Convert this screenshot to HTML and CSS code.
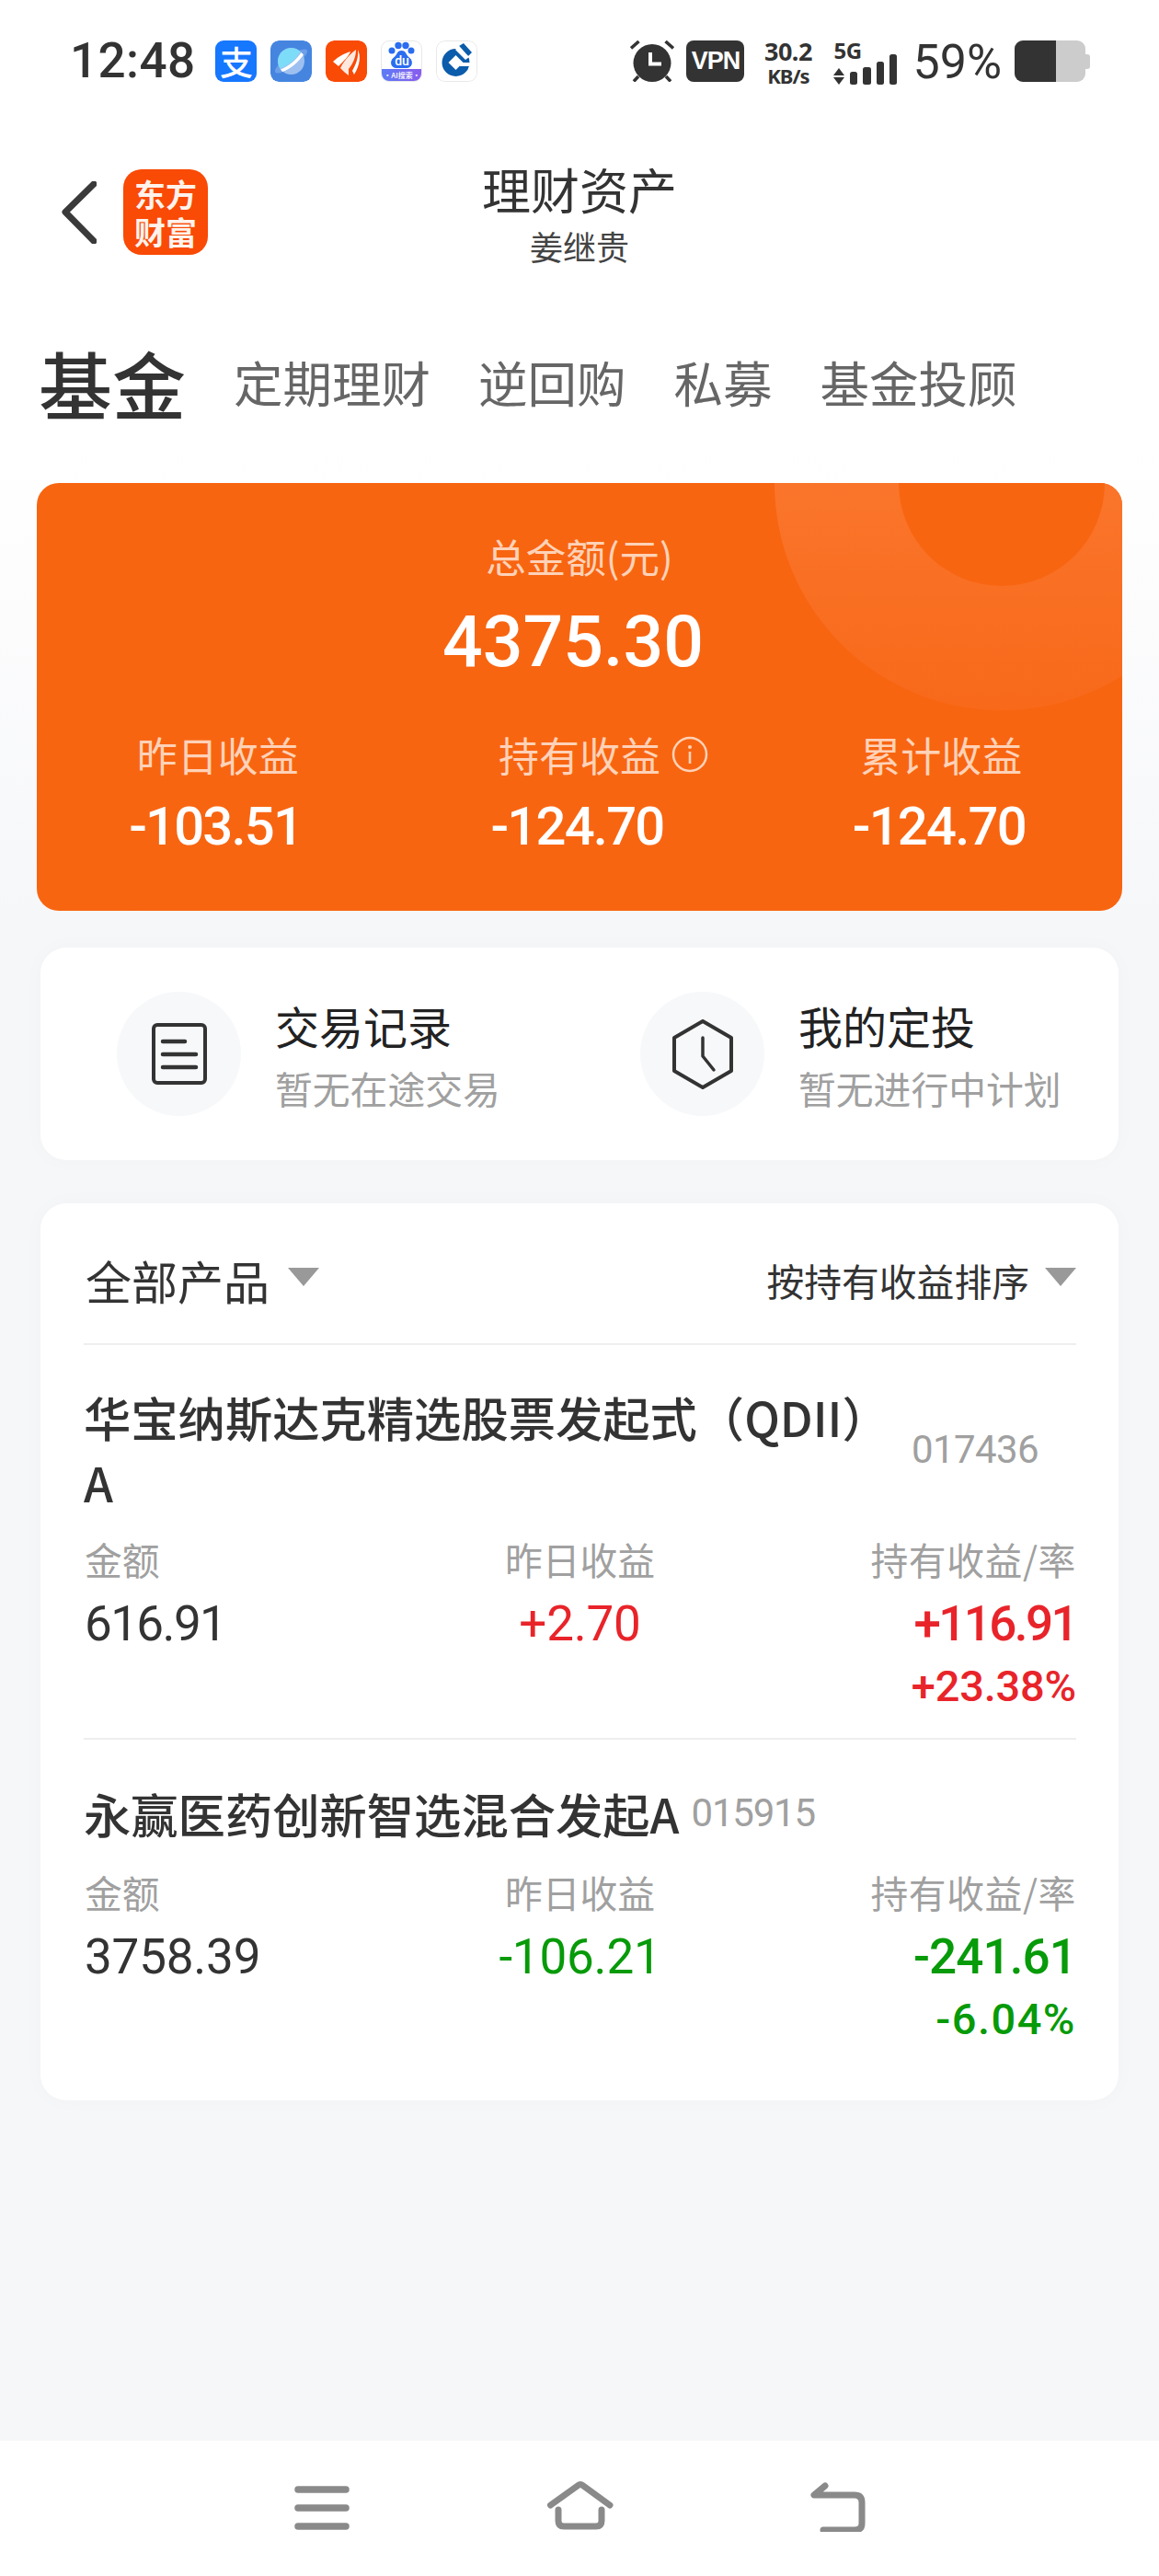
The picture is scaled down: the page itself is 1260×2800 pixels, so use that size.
FILE: index.html
```html
<!DOCTYPE html>
<html lang="zh-CN">
<head>
<meta charset="utf-8">
<title>理财资产</title>
<link rel="stylesheet" href="styles.css">
</head>
<body>
<div class="page">
  <div class="statusbar">
    <div class="status-left">
      <span class="time">12:48</span>
      <div class="app-icons">
        <span class="app app-alipay">支</span>
        <svg class="app" viewBox="0 0 45 45"><rect width="45" height="45" rx="9" fill="#4585E0"/><ellipse cx="22.500" cy="22.500" rx="21" ry="6" transform="rotate(-35 22.500 22.500)" fill="#6C9FE8"/><circle cx="22.500" cy="22.500" r="14.500" fill="#9DC0F0"/><path d="M10.500 30.500A14.500 14.500 0 0 1 32.500 12A40 40 0 0 1 10.500 30.500Z" fill="#7DDCF8"/><path d="M11 31.500C20 28 28 21 33.500 13L36 15.500C30 24 22 31 13 34Z" fill="#fff"/></svg>
        <svg class="app" viewBox="0 0 45 45"><rect width="45" height="45" rx="9" fill="#F94A06"/><path d="M8 23C14 17 21 14 27 12C25 17 20 22 14 28Z" fill="#fff"/><path d="M16 30C20 22 27 14 33 10C33 19 29 26 25 31L25 38C22 36 19 33 16 30Z" fill="#FFE9DF"/><path d="M29 33C33 26 36 18 35 10C38 16 38 26 31 37Z" fill="#fff"/></svg>
        <span class="app app-baidu">
          <svg class="paw" viewBox="0 0 45 33"><circle cx="12" cy="10" r="3.500" fill="#2B6DF0"/><circle cx="19" cy="4.500" r="3.700" fill="#2B6DF0"/><circle cx="27" cy="4.500" r="3.700" fill="#2B6DF0"/><circle cx="33" cy="10" r="3.500" fill="#2B6DF0"/><path d="M22.500 10C17 10 18 15 13.500 18C9 22 11 29 17 29H28C34 29 36 22 31.500 18C27 15 28 10 22.500 10Z" fill="#2B6DF0"/></svg>
          <span class="du">du</span>
          <span class="ai">·AI搜索·</span>
        </span>
        <svg class="app app-ccb" viewBox="0 0 45 45"><rect x="0.500" y="0.500" width="44" height="44" rx="9" fill="#fff" stroke="#E8E8E8"/><circle cx="21.500" cy="24" r="15" fill="#0B5CAB"/><path d="M21.500 16L29.500 24L21.500 32L13.500 24Z" fill="#fff"/><path d="M26 24H40V28H26Z" fill="#fff"/><path d="M25 6L30 3L39 13L35 17Z" fill="#0B5CAB"/><path d="M21 10L25 6L36 18L32 21Z" fill="#fff"/></svg>
      </div>
    </div>
    <div class="status-right">
      <svg class="alarm" viewBox="0 0 48 45"><circle cx="24" cy="24.500" r="20.500" fill="#333"/><path d="M22 13V25.500H34" fill="none" stroke="#fff" stroke-width="4"/><path d="M1 8.500L9.500 1M47 8.500L38.500 1M4 44.500L9 39M44 44.500L39 39" stroke="#333" stroke-width="3.500"/></svg>
      <span class="vpn">VPN</span>
      <span class="speed">30.2 KB/s</span>
      <div class="signal">
        <span class="fiveg">5G</span>
        <svg class="signal-bars" viewBox="0 0 70 33"><path d="M6 15L12 23H0ZM6 33L0 25H12Z" fill="#333"/><rect x="18" y="19" width="8" height="14" rx="2.500" fill="#333"/><rect x="32" y="14" width="9" height="19" rx="2.500" fill="#333"/><rect x="47" y="8" width="8" height="25" rx="2.500" fill="#333"/><rect x="61" y="0" width="8" height="33" rx="2.500" fill="#333"/></svg>
      </div>
      <span class="battery-pct">59%</span>
      <div class="battery"><span class="battery-fill"></span><span class="battery-tip"></span></div>
    </div>
  </div>

  <header class="header">
    <div class="header-left">
      <svg class="chevron" viewBox="0 0 38 68"><path d="M35 3L4 33.500L35 65" fill="none" stroke="#3a3a3a" stroke-width="7" stroke-linecap="round" stroke-linejoin="round"/></svg>
      <div class="logo">东方财富</div>
    </div>
    <div class="header-title">
      <div class="title">理财资产</div>
      <div class="subtitle">姜继贵</div>
    </div>
  </header>

  <nav class="tabs">
    <span class="tab tab-active">基金</span>
    <span class="tab">定期理财</span>
    <span class="tab">逆回购</span>
    <span class="tab">私募</span>
    <span class="tab">基金投顾</span>
  </nav>

  <section class="summary">
    <span class="ring"></span>
    <div class="summary-label">总金额(元)</div>
    <div class="summary-total">4375.30</div>
    <div class="summary-stats">
      <div class="stat"><div class="stat-label">昨日收益</div><div class="stat-value">-103.51</div></div>
      <div class="stat"><div class="stat-label">持有收益<svg class="info" viewBox="0 0 40 40"><circle cx="20" cy="20" r="18" fill="none" stroke="#FFD2B8" stroke-width="2.500"/><circle cx="20" cy="12" r="2" fill="#FFD2B8"/><rect x="18.700" y="17" width="2.600" height="13" fill="#FFD2B8"/></svg></div><div class="stat-value">-124.70</div></div>
      <div class="stat"><div class="stat-label">累计收益</div><div class="stat-value">-124.70</div></div>
    </div>
  </section>

  <section class="card actions">
    <div class="action">
      <span class="action-circle">
        <svg class="doc-icon" viewBox="0 0 60 67"><rect x="2" y="2" width="56" height="63" rx="4" fill="none" stroke="#333" stroke-width="4"/><path d="M12 20H36M12 34H48M12 48H48" stroke="#333" stroke-width="4.500" stroke-linecap="round"/></svg>
      </span>
      <div class="action-text"><div class="action-title">交易记录</div><div class="action-sub">暂无在途交易</div></div>
    </div>
    <div class="action">
      <span class="action-circle">
        <svg class="hex-icon" viewBox="0 0 66 76"><path d="M33 2L64 20V56L33 74L2 56V20Z" fill="none" stroke="#333" stroke-width="4" stroke-linejoin="round"/><path d="M33 20V40L45 55" fill="none" stroke="#333" stroke-width="3.500" stroke-linecap="round" stroke-linejoin="round"/></svg>
      </span>
      <div class="action-text"><div class="action-title">我的定投</div><div class="action-sub">暂无进行中计划</div></div>
    </div>
  </section>

  <section class="card products">
    <div class="products-head">
      <div class="filter filter-main">全部产品<span class="caret"></span></div>
      <div class="filter filter-sort">按持有收益排序<span class="caret"></span></div>
    </div>

    <article class="product product-first">
      <div class="product-name">
        <span class="name-text name-wrap">华宝纳斯达克精选股票发起式（QDII）A</span>
        <span class="code code-side">017436</span>
      </div>
      <div class="metrics">
        <div class="metric metric-left"><div class="metric-label">金额</div><div class="metric-value">616.91</div></div>
        <div class="metric metric-mid"><div class="metric-label">昨日收益</div><div class="metric-value up spaced">+2.70</div></div>
        <div class="metric metric-right"><div class="metric-label">持有收益/率</div><div class="metric-value up strong tight">+116.91</div><div class="metric-rate up">+23.38%</div></div>
      </div>
    </article>

    <article class="product product-second">
      <div class="product-name">
        <span class="name-text">永赢医药创新智选混合发起A</span>
        <span class="code">015915</span>
      </div>
      <div class="metrics">
        <div class="metric metric-left"><div class="metric-label">金额</div><div class="metric-value spaced">3758.39</div></div>
        <div class="metric metric-mid"><div class="metric-label">昨日收益</div><div class="metric-value down spaced">-106.21</div></div>
        <div class="metric metric-right"><div class="metric-label">持有收益/率</div><div class="metric-value down strong loose">-241.61</div><div class="metric-rate down rate-wide">-6.04%</div></div>
      </div>
    </article>
  </section>

  <footer class="navbar">
    <svg class="nav-menu" viewBox="0 0 60 48"><path d="M4 4H56M4 24H56M4 44H56" stroke="#8A8A8A" stroke-width="7.500" stroke-linecap="round"/></svg>
    <svg class="nav-home" viewBox="0 0 74 54"><path d="M4.500 27L34.500 5.500Q37 3.500 39.500 5.500L69 27" fill="none" stroke="#8A8A8A" stroke-width="7" stroke-linecap="round" stroke-linejoin="round"/><path d="M13 32V44Q13 50 19 50H54Q60 50 60 44V32" fill="none" stroke="#8A8A8A" stroke-width="7" stroke-linecap="round"/></svg>
    <svg class="nav-back" viewBox="0 0 62 54"><path d="M18 4L6 14H50Q58 14 58 22V45Q58 52 50 52H16" fill="none" stroke="#8A8A8A" stroke-width="7" stroke-linecap="round" stroke-linejoin="round"/></svg>
  </footer>
</div>
</body>
</html>
```

FILE: styles.css
```css
* { box-sizing: border-box; }
html, body { margin: 0; padding: 0; }
body {
  font-family: "Noto Sans CJK SC", "Noto Sans", sans-serif;
  color: #333;
}
.page {
  width: 1260px;
  height: 2800px;
  display: flex;
  flex-direction: column;
  overflow: hidden;
  background: linear-gradient(#fff 0, #fff 480px, #F6F7F9 1000px, #F6F7F9 100%);
}

/* status bar */
.statusbar {
  height: 134px;
  padding: 44px 80px 0 76px;
  display: flex;
  justify-content: space-between;
  align-items: flex-start;
}
.status-left { display: flex; align-items: center; gap: 22px; height: 45px; }
.time {
  font: 500 53px/45px Roboto, sans-serif;
  color: #333;
  letter-spacing: 0.4px;
}
.app-icons { display: flex; gap: 15px; }
.app { display: block; width: 45px; height: 45px; border-radius: 9px; flex: none; }
.app-alipay {
  background: #1677FF;
  color: #fff;
  font: 500 36px/45px "Noto Sans CJK SC", sans-serif;
  text-align: center;
}
.app-baidu {
  position: relative;
  background: #fff;
  border: 1px solid #E8E8E8;
  overflow: hidden;
}
.paw { position: absolute; left: -1px; top: 0; width: 45px; height: 33px; }
.du {
  position: absolute; left: 0; right: 0; top: 14px;
  height: 15px;
  overflow: hidden;
  text-align: center;
  font: 500 14px/14px Roboto, sans-serif;
  color: #fff;
}
.ai {
  position: absolute; left: -1px; right: -1px; bottom: 0;
  height: 13px;
  background: linear-gradient(90deg, #5B7CF5, #8A5BEF);
  color: #fff;
  text-align: center;
  font: 500 8px/13px "Noto Sans CJK SC", sans-serif;
}
.status-right { display: flex; align-items: flex-start; height: 48px; }
.alarm { width: 48px; height: 45px; margin-right: 13px; }
.vpn {
  width: 63px; height: 45px;
  background: #333;
  color: #fff;
  border-radius: 8px;
  font: 700 27px/45px "Liberation Sans", sans-serif;
  letter-spacing: -1px;
  text-align: center;
  margin-right: 19px;
}
.speed {
  display: block;
  width: 57px;
  margin-top: -2px;
  margin-right: 21px;
  text-align: center;
  font: 700 22px/27px "Noto Sans", sans-serif;
  letter-spacing: -1px;
  color: #333;
}
.speed::first-line { font-size: 27px; letter-spacing: -0.5px; }
.signal { position: relative; width: 70px; height: 47px; margin-right: 16px; }
.fiveg {
  position: absolute; left: 0; top: 0;
  font: 700 24px/22px "Noto Sans", sans-serif;
  letter-spacing: -0.5px;
  color: #333;
}
.signal-bars { position: absolute; left: 0; top: 15px; width: 70px; height: 33px; }
.battery-pct {
  font: 400 52px/50px Roboto, sans-serif;
  color: #333;
  margin-top: -1px;
  margin-right: 14px;
}
.battery {
  position: relative;
  width: 77px; height: 45px;
  background: #CCC;
  border-radius: 9px;
}
.battery-fill {
  position: absolute; left: 0; top: 0; bottom: 0; width: 45px;
  background: #333;
  border-radius: 9px 0 0 9px;
}
.battery-tip {
  position: absolute; right: -5px; top: 15px;
  width: 5px; height: 16px;
  background: #CCC;
  border-radius: 0 3px 3px 0;
}

/* header */
.header {
  height: 216px;
  display: grid;
  grid-template-columns: 1fr auto 1fr;
  align-items: flex-start;
}
.header-left { display: flex; align-items: center; padding: 50px 0 0 67px; gap: 29px; }
.chevron { width: 38px; height: 68px; }
.logo {
  width: 92px; height: 93px;
  background: #F94A06;
  border-radius: 20px;
  padding-top: 6px;
  text-align: center;
  color: #FFF3EC;
  font: 700 34px/41px "Noto Sans CJK SC", sans-serif;
}
.header-title { text-align: center; padding-top: 35px; }
.title { font-size: 53px; line-height: 73px; color: #333; }
.subtitle { font-size: 36px; line-height: 50px; color: #444; }

/* tabs */
.tabs {
  height: 175px;
  padding: 15px 0 0 42px;
  display: flex;
  align-items: flex-start;
  gap: 52px;
}
.tab { font-size: 53.500px; line-height: 100px; color: #666; }
.tab-active { font-size: 80px; font-weight: 500; color: #333; }

/* orange card */
.summary {
  position: relative;
  margin: 0 40px;
  height: 465px;
  border-radius: 24px;
  background: #F86511;
  overflow: hidden;
  color: #fff;
  text-align: center;
  padding-top: 50px;
}
.ring {
  position: absolute;
  left: 802px; top: -247px;
  width: 494px; height: 494px;
  border-radius: 50%;
  background: linear-gradient(#FA752B 50%, #F8691A 100%);
}
.ring::after {
  content: "";
  position: absolute;
  left: 135px; top: 135px;
  width: 224px; height: 224px;
  border-radius: 50%;
  background: #F86511;
}
.summary > div { position: relative; }
.summary-label { font-size: 43.500px; line-height: 60px; color: #FFD2B8; }
.summary-total { font: 500 77px/92px Roboto, sans-serif; margin-top: 17px; padding-right: 14px; }
.summary-stats { display: grid; grid-template-columns: repeat(3, 1fr); margin-top: 45px; }
.stat-label { position: relative; display: inline-block; font-size: 44px; line-height: 62px; color: #FFD2B8; }
.info { position: absolute; left: 188px; top: 11px; width: 40px; height: 40px; }
.stat-value { font: 500 58px/62px Roboto, sans-serif; margin-top: 16px; padding-right: 5px; letter-spacing: -1.800px; }

/* white cards */
.card {
  margin: 40px 44px 0;
  background: #fff;
  border-radius: 28px;
  box-shadow: 0 0 24px rgba(30, 40, 60, 0.025);
}
.actions { height: 231px; display: flex; padding-left: 83px; }
.action { display: flex; align-items: center; width: 571px; gap: 37px; }
.action + .action { width: auto; gap: 37px; margin-left: -2px; }
.action-circle {
  width: 135px; height: 135px;
  border-radius: 50%;
  background: #F7F8FA;
  display: flex; align-items: center; justify-content: center;
  flex: none;
}
.doc-icon { width: 60px; height: 67px; }
.hex-icon { width: 66px; height: 76px; }
.action-text { padding-top: 4px; }
.action-title { font-size: 48px; line-height: 60px; color: #222; }
.action-sub { font-size: 40.800px; line-height: 56px; color: #A0A0A0; margin-top: 11px; }

.products { height: 975px; margin-top: 47px; padding: 0 46px 0 47px; }
.products-head {
  height: 154px;
  display: flex;
  justify-content: space-between;
  align-items: center;
  border-bottom: 2px solid #EEE;
  padding-top: 14px;
}
.filter { display: flex; align-items: center; }
.filter-main { font-size: 50px; color: #333; gap: 20px; margin-left: 2px; }
.filter-sort { font-size: 40.800px; color: #333; gap: 17px; }
.caret {
  width: 0; height: 0;
  border-left: 17px solid transparent;
  border-right: 17px solid transparent;
  border-top: 20px solid #999;
  margin-top: -6px;
}
.product { padding-top: 42px; }
.product-first { height: 429px; border-bottom: 2px solid #EEE; }
.product-second { padding-top: 44px; }
.product-name { display: flex; align-items: center; }
.name-text { font-size: 51.300px; font-weight: 500; line-height: 71px; color: #333; }
.name-wrap { width: 860px; flex: none; }
.code { font: 400 42px/71px Roboto, sans-serif; color: #A0A0A0; margin-left: 13px; letter-spacing: -1.200px; }
.code-side { margin-left: 40px; letter-spacing: -0.6px; }
.metrics { display: grid; grid-template-columns: 1fr 1fr 1fr; margin-top: 20px; }
.product-second .metrics { margin-top: 22px; }
.metric-mid { text-align: center; }
.metric-right { text-align: right; }
.metric-left { padding-left: 1px; }
.metric-label { font-size: 40.800px; line-height: 58px; color: #A0A0A0; }
.metric-right .metric-label { letter-spacing: 0.6px; }
.metric-value { font: 400 53px/62px Roboto, sans-serif; margin-top: 10px; letter-spacing: -1.600px; color: #333; }
.metric-value.strong { font-weight: 500; }
.metric-value.spaced { letter-spacing: -0.200px; }
.metric-value.tight { letter-spacing: -2.600px; }
.metric-value.loose { letter-spacing: -0.900px; }
.metric-rate { font: 500 47px/58px Roboto, sans-serif; margin-top: 8px; letter-spacing: -0.200px; }
.metric-rate.rate-wide { letter-spacing: 1.500px; }
.metric-value.up, .metric-rate.up { color: #E8242A; }
.metric-value.down, .metric-rate.down { color: #079A09; }

/* bottom bar */
.navbar {
  position: relative;
  margin-top: auto;
  height: 147px;
  background: #fff;
  flex: none;
}
.nav-menu, .nav-home, .nav-back { position: absolute; }
.nav-menu { left: 320px; top: 49px; width: 60px; height: 48px; }
.nav-home { left: 594px; top: 43px; width: 74px; height: 54px; }
.nav-back { left: 879px; top: 45px; width: 62px; height: 54px; }
```
